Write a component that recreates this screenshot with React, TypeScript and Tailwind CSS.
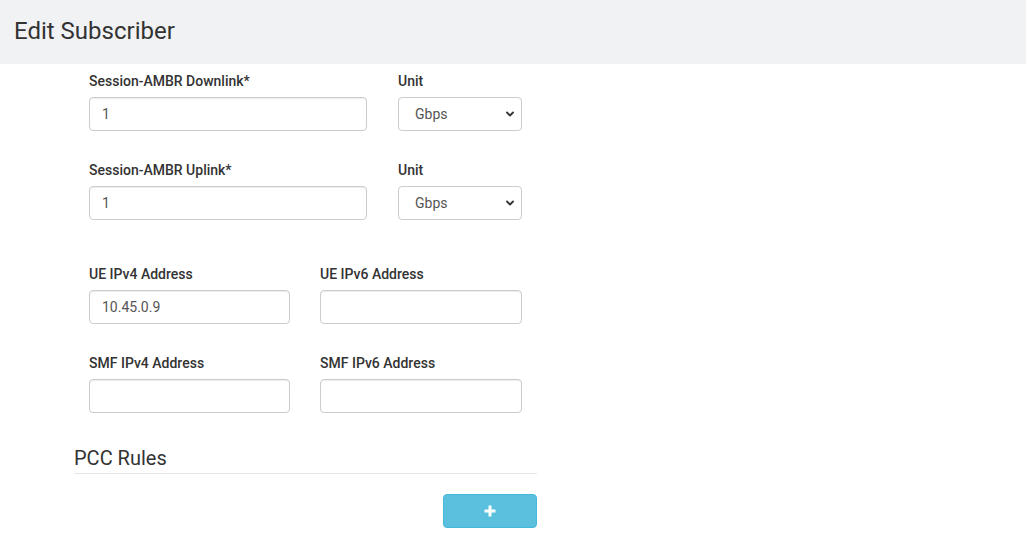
import React from "react";

function Label({ children }: { children: React.ReactNode }) {
  return (
    <div className="text-[14px] leading-[20px] font-medium text-[#333] mb-[6px]">{children}</div>
  );
}

function Input({ value, w }: { value?: string; w: string }) {
  return (
    <div
      className={`${w} h-[34px] border border-[#ccc] rounded-[4px] px-[12px] flex items-center text-[14px] text-[#555] bg-white shadow-[inset_0_1px_1px_rgba(0,0,0,0.075)]`}
    >
      {value}
    </div>
  );
}

function Select() {
  return (
    <div className="w-[124px] h-[34px] border border-[#ccc] rounded-[4px] pl-[16px] pr-[6px] flex items-center justify-between text-[14px] text-[#555] bg-white">
      <span>Gbps</span>
      <svg width="10" height="10" viewBox="0 0 10 10">
        <path d="M2 3.5 L5 6.5 L8 3.5" fill="none" stroke="#333" strokeWidth="1.8" strokeLinecap="round" strokeLinejoin="round" />
      </svg>
    </div>
  );
}

export default function App() {
  return (
    <div className="w-[1026px] h-[544px] bg-white overflow-hidden" style={{ fontFamily: "Roboto, 'Liberation Sans', sans-serif" }}>
      <div className="h-[64px] bg-[#f1f2f4] flex items-center pl-[14px] pb-[2px]">
        <h1 className="text-[24px] text-[#333] font-normal">Edit Subscriber</h1>
      </div>
      <div className="w-[463px] ml-[74px]">
        <div className="pl-[15px] pt-[7px]">
          <div className="flex gap-[31px]">
            <div>
              <Label>Session-AMBR Downlink*</Label>
              <Input value="1" w="w-[278px]" />
            </div>
            <div>
              <Label>Unit</Label>
              <Select />
            </div>
          </div>
          <div className="flex gap-[31px] mt-[29px]">
            <div>
              <Label>Session-AMBR Uplink*</Label>
              <Input value="1" w="w-[278px]" />
            </div>
            <div>
              <Label>Unit</Label>
              <Select />
            </div>
          </div>
          <div className="flex gap-[30px] mt-[44px]">
            <div>
              <Label>UE IPv4 Address</Label>
              <Input value="10.45.0.9" w="w-[201px]" />
            </div>
            <div>
              <Label>UE IPv6 Address</Label>
              <Input w="w-[202px]" />
            </div>
          </div>
          <div className="flex gap-[30px] mt-[29px]">
            <div>
              <Label>SMF IPv4 Address</Label>
              <Input w="w-[201px]" />
            </div>
            <div>
              <Label>SMF IPv6 Address</Label>
              <Input w="w-[202px]" />
            </div>
          </div>
        </div>
        <div className="mt-[32px] border-b border-[#e5e5e5] pb-[2px]">
          <div className="text-[20px] leading-[26px] text-[#333]">PCC Rules</div>
        </div>
        <div className="flex justify-end mt-[20px]">
          <div className="w-[94px] h-[34px] bg-[#5bc0de] border border-[#46b8da] rounded-[4px] flex items-center justify-center">
            <svg width="14" height="14" viewBox="0 0 14 14">
              <path d="M7 1.5 V12.5 M1.5 7 H12.5" stroke="white" strokeWidth="3" />
            </svg>
          </div>
        </div>
      </div>
    </div>
  );
}
